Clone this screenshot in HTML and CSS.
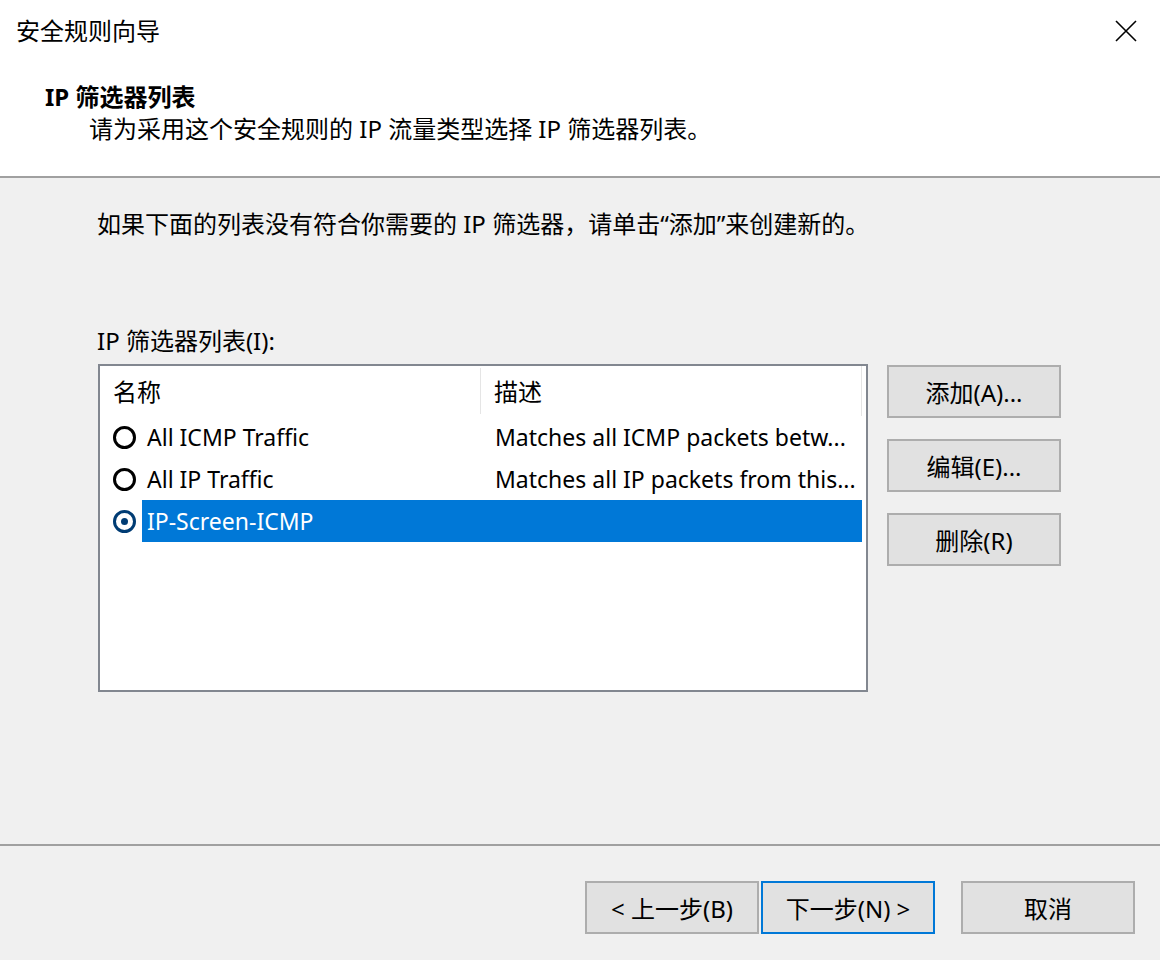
FILE: index.html
```html
<!DOCTYPE html>
<html lang="zh-CN">
<head>
<meta charset="utf-8">
<title>安全规则向导</title>
<link rel="stylesheet" href="styles.css">
</head>
<body>
<div class="window">
  <header class="header">
    <div class="titlebar">
      <span class="title">安全规则向导</span>
      <svg class="close" width="22" height="22" viewBox="0 0 22 22"><path d="M1 1 L21 21 M21 1 L1 21" stroke="#000" stroke-width="1.6" fill="none"/></svg>
    </div>
    <div class="page-title">IP 筛选器列表</div>
    <div class="page-sub">请为采用这个安全规则的 IP 流量类型选择 IP 筛选器列表。</div>
  </header>
  <main class="main">
    <p class="intro">如果下面的列表没有符合你需要的 IP 筛选器，请单击“添加”来创建新的。</p>
    <div class="label">IP 筛选器列表(I):</div>
    <div class="list-row">
      <div class="listbox">
        <div class="lv-head">
          <div class="col-name hcell">名称</div>
          <div class="col-desc hcell">描述</div>
        </div>
        <div class="lv-row">
          <div class="col-name cell"><span class="radio"></span><span class="name-text">All ICMP Traffic</span></div>
          <div class="col-desc cell desc">Matches all ICMP packets betw...</div>
        </div>
        <div class="lv-row">
          <div class="col-name cell"><span class="radio"></span><span class="name-text">All IP Traffic</span></div>
          <div class="col-desc cell desc">Matches all IP packets from this...</div>
        </div>
        <div class="lv-row selected">
          <div class="col-name cell"><span class="radio checked"></span><span class="name-text sel">IP-Screen-ICMP</span></div>
          <div class="col-desc cell desc sel"></div>
        </div>
      </div>
      <div class="side-buttons">
        <button class="btn">添加(A)...</button>
        <button class="btn">编辑(E)...</button>
        <button class="btn">删除(R)</button>
      </div>
    </div>
  </main>
  <footer class="footer">
    <button class="btn wide">&lt; 上一步(B)</button>
    <button class="btn wide default">下一步(N) &gt;</button>
    <button class="btn wide cancel">取消</button>
  </footer>
</div>
</body>
</html>
```
FILE: styles.css
```css
* { box-sizing: border-box; }
html, body { margin: 0; padding: 0; }
body {
  width: 1160px;
  height: 960px;
  background: #f0f0f0;
  font-family: "Noto Sans", "Noto Sans CJK SC", sans-serif;
  font-size: 24px;
  color: #000;
  overflow: hidden;
}
.window {
  display: flex;
  flex-direction: column;
  height: 960px;
}
.header {
  background: #fff;
  height: 178px;
  border-bottom: 2px solid #a0a0a0;
  flex: none;
}
.titlebar {
  display: flex;
  align-items: center;
  justify-content: space-between;
  height: 32px;
  margin-top: 15px;
  padding: 0 23px 0 16px;
}
.title { line-height: 32px; }
.close { display: block; }
.page-title {
  margin-top: 34px;
  padding-left: 45px;
  font-weight: bold;
  line-height: 32px;
}
.page-sub {
  padding-left: 89px;
  line-height: 32px;
}
.main {
  flex: 1;
  padding-left: 97px;
  padding-top: 30px;
}
.intro {
  margin: 0;
  line-height: 32px;
}
.label {
  margin-top: 85px;
  line-height: 32px;
}
.list-row {
  display: flex;
  align-items: flex-start;
  gap: 19px;
  margin-top: 7px;
  margin-left: 1px;
}
.listbox {
  width: 770px;
  height: 328px;
  background: #fff;
  border: 2px solid #828790;
  display: flex;
  flex-direction: column;
}
.lv-head {
  display: flex;
  height: 50px;
  width: 762px;
  border-right: 1px solid #e5e5e5;
}
.lv-head .col-name { border-right: 1px solid #e5e5e5; }
.hcell {
  display: flex;
  align-items: center;
  padding-left: 13px;
  padding-bottom: 2px;
  margin: 2px 0;
}
.col-name { width: 381px; flex: none; }
.col-desc { flex: 1; min-width: 0; }
.lv-row {
  display: flex;
  height: 42px;
  width: 762px;
  font-size: 23px;
}
.cell {
  display: flex;
  align-items: center;
  white-space: nowrap;
  overflow: hidden;
}
.lv-row .col-name { padding-left: 13px; }
.desc { padding-left: 14px; }
.radio {
  width: 23px;
  height: 23px;
  border: 3px solid #000;
  border-radius: 50%;
  flex: none;
  margin-right: 6px;
  display: flex;
  align-items: center;
  justify-content: center;
}
.radio.checked { border-color: #003c74; }
.radio.checked::after {
  content: "";
  width: 7px;
  height: 7px;
  border-radius: 50%;
  background: #003c74;
}
.name-text {
  height: 42px;
  line-height: 42px;
  padding-left: 5px;
  flex: 1;
}
.sel { background: #0078d7; color: #fff; }
.side-buttons {
  display: flex;
  flex-direction: column;
  gap: 21px;
  margin-top: 1px;
}
.btn {
  font: inherit;
  color: #000;
  width: 174px;
  height: 53px;
  background: #e1e1e1;
  border: 2px solid #adadad;
  padding: 0;
  cursor: default;
}
.footer {
  flex: none;
  height: 116px;
  border-top: 2px solid #a0a0a0;
  display: flex;
  align-items: flex-start;
  padding: 35px 25px 0 0;
  justify-content: flex-end;
  gap: 2px;
}
.btn.wide { width: 174px; }
.btn.default { border-color: #0078d7; }
.btn.cancel { margin-left: 24px; }
```
